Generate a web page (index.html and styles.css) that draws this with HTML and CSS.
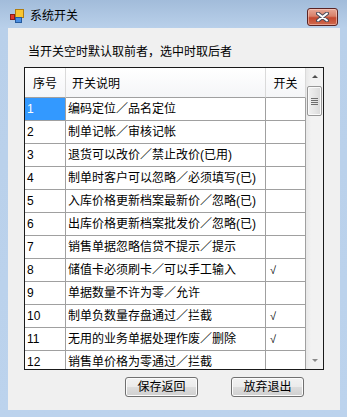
FILE: index.html
```html
<!DOCTYPE html>
<html lang="zh-CN">
<head>
    <meta charset="UTF-8">
    <title>系统开关</title>
    <link rel="stylesheet" href="styles.css">
</head>
<body>
    <div class="window">
        <div class="titlebar">
            <svg class="app-icon" width="15" height="14" viewBox="0 0 15 14">
                <rect x="0.5" y="5.5" width="4" height="5" fill="#e0362c" stroke="#8a1d16"/>
                <rect x="5.5" y="0.5" width="8" height="8" fill="#f7c531" stroke="#b07d10"/>
                <rect x="5.5" y="8.5" width="6" height="5" fill="#4c8ee0" stroke="#245a9e"/>
            </svg>
            <span class="title">系统开关</span>
            <button class="close">
                <svg width="13" height="10" viewBox="0 0 13 10">
                    <path d="M2 1.5 L11 8.5 M11 1.5 L2 8.5" stroke="#4b4b5a" stroke-width="4" stroke-linecap="round"/>
                    <path d="M2 1.5 L11 8.5 M11 1.5 L2 8.5" stroke="#fff" stroke-width="2" stroke-linecap="round"/>
                </svg>
            </button>
        </div>

        <div class="client">
            <p class="hint">当开关空时默认取前者，选中时取后者</p>

            <div class="grid">
                <div class="grid-body">
                    <div class="row head">
                        <div class="cell c-no">序号</div>
                        <div class="cell c-desc">开关说明</div>
                        <div class="cell c-on">开关</div>
                    </div>
                    <div class="row"><div class="cell current">1</div><div class="cell">编码定位／品名定位</div><div class="cell"></div></div>
                    <div class="row"><div class="cell">2</div><div class="cell">制单记帐／审核记帐</div><div class="cell"></div></div>
                    <div class="row"><div class="cell">3</div><div class="cell">退货可以改价／禁止改价(已用)</div><div class="cell"></div></div>
                    <div class="row"><div class="cell">4</div><div class="cell">制单时客户可以忽略／必须填写(已)</div><div class="cell"></div></div>
                    <div class="row"><div class="cell">5</div><div class="cell">入库价格更新档案最新价／忽略(已)</div><div class="cell"></div></div>
                    <div class="row"><div class="cell">6</div><div class="cell">出库价格更新档案批发价／忽略(已)</div><div class="cell"></div></div>
                    <div class="row"><div class="cell">7</div><div class="cell">销售单据忽略信贷不提示／提示</div><div class="cell"></div></div>
                    <div class="row"><div class="cell">8</div><div class="cell">储值卡必须刷卡／可以手工输入</div><div class="cell check">√</div></div>
                    <div class="row"><div class="cell">9</div><div class="cell">单据数量不许为零／允许</div><div class="cell"></div></div>
                    <div class="row"><div class="cell">10</div><div class="cell">制单负数量存盘通过／拦截</div><div class="cell check">√</div></div>
                    <div class="row"><div class="cell">11</div><div class="cell">无用的业务单据处理作废／删除</div><div class="cell check">√</div></div>
                    <div class="row"><div class="cell">12</div><div class="cell">销售单价格为零通过／拦截</div><div class="cell"></div></div>
                </div>
                <div class="vscroll">
                    <div class="sb-btn"><span class="arrow up"></span></div>
                    <div class="thumb"><span class="grip"></span></div>
                    <div class="sb-btn bottom"><span class="arrow down"></span></div>
                </div>
            </div>

            <div class="actions">
                <button class="btn">保存返回</button>
                <button class="btn">放弃退出</button>
            </div>
        </div>
    </div>
</body>
</html>
```

FILE: styles.css
```css
body {
    margin: 0;
    font-family: "Liberation Sans", "Noto Sans CJK SC", sans-serif;
    font-size: 12px;
    color: #000;
}
.window {
    width: 347px;
    height: 417px;
    display: flex;
    flex-direction: column;
    background: linear-gradient(#a2bcda 0, #b9d0ea 28px, #bcd3ed 100%);
}
.titlebar {
    height: 28px;
    flex-shrink: 0;
    display: flex;
    align-items: flex-start;
}
.app-icon {
    margin: 9px 5px 0 10px;
}
.title {
    margin-top: 9px;
    line-height: 14px;
}
.close {
    margin: 8px 9px 0 auto;
    width: 31px;
    height: 18px;
    padding: 0;
    border: 1px solid #5a2424;
    border-radius: 3px;
    background: linear-gradient(#e7a897 0%, #d88069 45%, #c4482f 55%, #cf6a4f 100%);
    box-shadow: inset 0 0 0 1px rgba(255, 220, 210, 0.5);
    display: flex;
    align-items: center;
    justify-content: center;
}
.client {
    flex: 1;
    margin: 0 7px 7px 8px;
    background: #f0f0f0;
    padding: 17px 0 0 16px;
}
.hint {
    margin: 0 0 8px 4px;
    line-height: 14px;
}
.grid {
    width: 300px;
    height: 303px;
    box-sizing: border-box;
    border: 1px solid #1a1a1a;
    display: flex;
    background: #fff;
}
.grid-body {
    width: 281px;
    overflow: hidden;
}
.row {
    display: grid;
    grid-template-columns: 41px 200px 40px;
    height: 23px;
}
.cell {
    box-sizing: border-box;
    border-right: 1px solid #a0a0a0;
    border-bottom: 1px solid #a0a0a0;
    padding-left: 2px;
    line-height: 22px;
    white-space: nowrap;
    overflow: hidden;
}
.cell.current {
    background: #3399ff;
    color: #fff;
}
.cell.check {
    padding-left: 4px;
    font-size: 11px;
}
.row.head {
    height: 30px;
    background: linear-gradient(#ffffff, #f4f5f7);
}
.head .cell {
    border-right-color: #dadada;
    padding-top: 3px;
    line-height: 26px;
}
.head .c-no,
.head .c-on {
    text-align: center;
    padding-left: 0;
}
.head .c-desc {
    padding-left: 6px;
}
.vscroll {
    width: 17px;
    display: flex;
    flex-direction: column;
    background: linear-gradient(90deg, #e8e8e8, #f2f2f2 30%, #f2f2f2);
}
.sb-btn {
    height: 17px;
    display: flex;
    align-items: center;
    justify-content: center;
}
.sb-btn.bottom {
    margin-top: auto;
}
.arrow {
    width: 0;
    height: 0;
    border-left: 3px solid transparent;
    border-right: 3px solid transparent;
}
.arrow.up {
    border-bottom: 3px solid #505050;
}
.arrow.down {
    border-top: 3px solid #8a8a8a;
}
.thumb {
    margin: 1px 1px 0 1px;
    height: 30px;
    box-sizing: border-box;
    border: 1px solid #979797;
    border-radius: 2px;
    background: linear-gradient(90deg, #f1f1f1, #e6e6e6 50%, #d9d9d9);
    box-shadow: inset 0 0 0 1px #fafafa;
    display: flex;
    align-items: center;
    justify-content: center;
}
.grip {
    width: 7px;
    height: 7px;
    background: repeating-linear-gradient(#6e6e6e 0, #6e6e6e 1px, transparent 1px, transparent 2px);
}
.actions {
    display: flex;
    gap: 33px;
    margin-top: 7px;
    padding-left: 101px;
}
.btn {
    width: 73px;
    height: 20px;
    padding: 0;
    font-family: inherit;
    font-size: 12px;
    line-height: 16px;
    border: 1px solid #707070;
    border-radius: 3px;
    background: linear-gradient(#f2f2f2 0%, #ebebeb 50%, #dddddd 50%, #cfcfcf 100%);
    box-shadow: inset 0 0 0 1px #fcfcfc;
    cursor: pointer;
}
```
